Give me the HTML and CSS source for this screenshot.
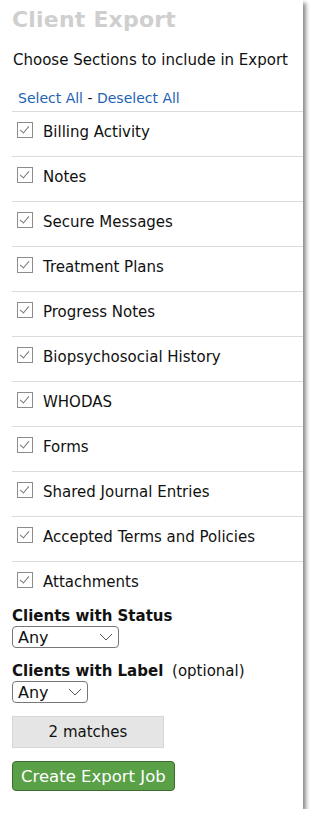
FILE: index.html
```html
<!DOCTYPE html>
<html lang="en">

<head>
    <meta charset="UTF-8">
    <title>Client Export</title>
    <link rel="stylesheet" href="styles.css">
</head>

<body>
    <div class="panel">
        <h1 class="title">Client Export</h1>
        <p class="intro">Choose Sections to include in Export</p>
        <div class="toggles">
            <a href="#">Select All</a> - <a href="#">Deselect All</a>
        </div>
        <ul class="sections">
            <li><span class="check"></span>Billing Activity</li>
            <li><span class="check"></span>Notes</li>
            <li><span class="check"></span>Secure Messages</li>
            <li><span class="check"></span>Treatment Plans</li>
            <li><span class="check"></span>Progress Notes</li>
            <li><span class="check"></span>Biopsychosocial History</li>
            <li><span class="check"></span>WHODAS</li>
            <li><span class="check"></span>Forms</li>
            <li><span class="check"></span>Shared Journal Entries</li>
            <li><span class="check"></span>Accepted Terms and Policies</li>
            <li><span class="check"></span>Attachments</li>
        </ul>
        <div class="field">
            <label><b>Clients with Status</b></label>
            <div class="select wide">
                <span>Any</span>
                <svg width="14" height="8" viewBox="0 0 14 8"><path d="M1 1 L7 7 L13 1" fill="none" stroke="#555" stroke-width="1"/></svg>
            </div>
        </div>
        <div class="field">
            <label><b>Clients with Label</b> <span class="opt">(optional)</span></label>
            <div class="select narrow">
                <span>Any</span>
                <svg width="14" height="8" viewBox="0 0 14 8"><path d="M1 1 L7 7 L13 1" fill="none" stroke="#555" stroke-width="1"/></svg>
            </div>
        </div>
        <div class="matches">2 matches</div>
        <button class="btn">Create Export Job</button>
    </div>
</body>

</html>
```

FILE: styles.css
```css
body {
    margin: 0;
    background: #fff;
    font-family: "DejaVu Sans", Verdana, sans-serif;
    color: #111;
}

.panel {
    width: 291px;
    height: 809px;
    padding-left: 12px;
    box-sizing: content-box;
    background: #fff;
    box-shadow: 3px 3px 4px rgba(0, 0, 0, 0.45);
    overflow: hidden;
}

.title {
    margin: 0;
    padding-top: 6px;
    font-size: 22px;
    line-height: 28px;
    font-weight: bold;
    color: #cfcfcf;
    letter-spacing: 0.2px;
}

.intro {
    margin: 17px 0 0 1px;
    font-size: 15px;
    line-height: 18px;
}

.toggles {
    margin: 20px 0 0 6px;
    font-size: 14px;
    line-height: 18px;
    height: 22px;
}

.toggles a {
    color: #1f63b5;
    text-decoration: none;
}

.sections {
    list-style: none;
    margin: 0;
    padding: 0;
}

.sections li {
    display: flex;
    align-items: flex-start;
    height: 34px;
    padding-top: 10px;
    border-top: 1px solid #dcdcdc;
    font-size: 15px;
    line-height: 20px;
    box-sizing: content-box;
}

.sections li:last-child {
    height: 30px;
}

.check {
    position: relative;
    width: 14px;
    height: 14px;
    margin: 0 10px 0 5px;
    border: 1px solid #8c8c8c;
    background: #fff;
}

.check:after {
    content: '';
    position: absolute;
    left: 4px;
    top: 1px;
    width: 4px;
    height: 8px;
    border-right: 1px solid #777;
    border-bottom: 1px solid #777;
    transform: rotate(40deg);
}

.field {
    margin-top: 6px;
}

.field + .field {
    margin-top: 15px;
}

.field label {
    display: block;
    font-size: 15px;
    line-height: 17px;
}

.field .opt {
    margin-left: 4px;
}

.select {
    display: flex;
    align-items: center;
    justify-content: space-between;
    height: 20px;
    margin-top: 1px;
    padding: 0 5px;
    border: 1px solid #777;
    border-radius: 4px;
    font-size: 16px;
    box-sizing: content-box;
}

.select.wide {
    width: 95px;
}

.select.narrow {
    width: 64px;
}

.matches {
    margin-top: 13px;
    width: 150px;
    height: 30px;
    line-height: 30px;
    text-align: center;
    font-size: 15px;
    background: #e5e5e5;
    border: 1px solid #d6d6d6;
}

.btn {
    display: block;
    margin-top: 13px;
    padding: 0 8px;
    height: 30px;
    background: #5aa047;
    color: #fff;
    border: 1px solid #3c6b32;
    border-radius: 4px;
    font-family: "DejaVu Sans", Verdana, sans-serif;
    font-size: 16.5px;
    cursor: pointer;
}
```
